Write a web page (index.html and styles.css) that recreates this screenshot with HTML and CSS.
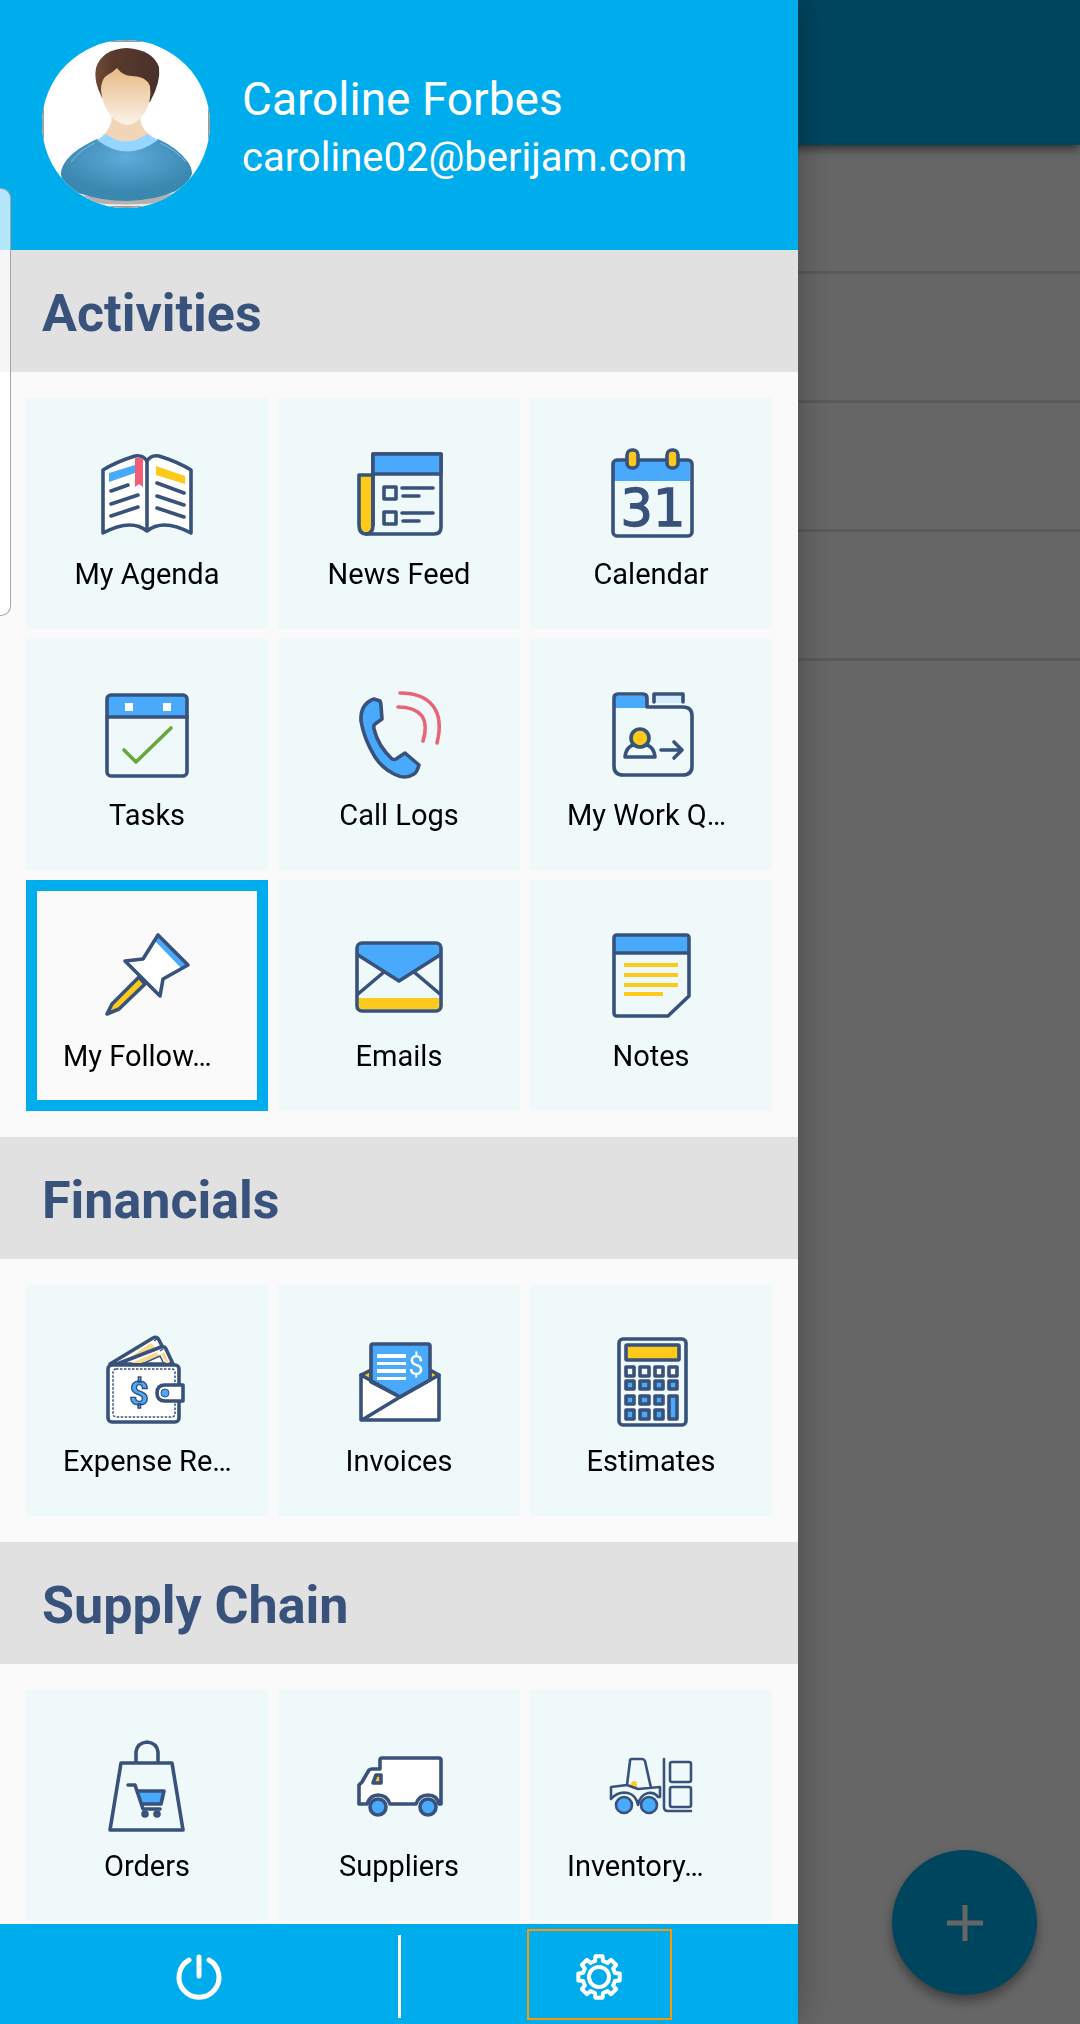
FILE: index.html
```html
<!DOCTYPE html>
<html lang="en">
<head>
    <meta charset="UTF-8">
    <meta name="viewport" content="width=device-width, initial-scale=1.0">
    <title>Menu</title>
    <link rel="stylesheet" href="styles.css">
</head>
<body>

<!-- Page under the drawer -->
<main class="page">
    <header class="app-bar"></header>
    <ul class="list">
        <li></li>
        <li></li>
        <li></li>
        <li></li>
    </ul>
    <button class="fab" aria-label="Add">
        <svg viewBox="0 0 40 40"><path d="M20 2V38M2 20H38"/></svg>
    </button>
</main>
<div class="scrim"></div>

<aside class="drawer">
    <header class="profile">
        <svg class="avatar" viewBox="0 0 168 168">
            <defs>
                <clipPath id="round"><circle cx="84" cy="84" r="84"/></clipPath>
                <linearGradient id="face" x1="0" y1="0" x2="0" y2="1">
                    <stop offset="0" stop-color="#e8b983"/>
                    <stop offset="1" stop-color="#fbf3ea"/>
                </linearGradient>
                <linearGradient id="hair" x1="0" y1="0" x2="1" y2="0">
                    <stop offset="0" stop-color="#6e4a35"/>
                    <stop offset="0.33" stop-color="#55382a"/>
                    <stop offset="0.35" stop-color="#573a2d"/>
                    <stop offset="1" stop-color="#49302a"/>
                </linearGradient>
                <radialGradient id="shirt" cx="0.5" cy="0.3" r="0.55">
                    <stop offset="0" stop-color="#5fabda"/>
                    <stop offset="1" stop-color="#3a87b0"/>
                </radialGradient>
            </defs>
            <g clip-path="url(#round)">
                <rect width="168" height="168" fill="#fff"/>
                <path d="M24 152Q84 166 144 150L140 160Q84 172 30 160Z" fill="#b4b0b0"/>
                <path d="M36 161Q84 168 132 161L126 168H42Z" fill="#eee"/>
                <rect x="1" y="1" width="166" height="166" fill="none" stroke="#9b9b9b" stroke-width="2"/>
                <path d="M70 74Q70 88 60 96L84 108L110 96Q98 90 98 74Z" fill="#f1d5b6"/>
                <path d="M55 99Q26 112 20 128Q18 134 20 139Q26 148 36 153Q60 161 85 161Q114 160 134 151Q146 144 150 134Q150 128 146 122Q136 108 116 99Q86 117 55 99Z" fill="url(#shirt)"/>
                <path d="M29 122Q38 110 53 103M144 122Q134 110 118 103" fill="none" stroke="#7dbbe0" stroke-width="1"/>
                <path d="M64 94Q84 109 105 94L116 100Q85 123 55 100Z" fill="#96d5ff"/>
                <path d="M60 58Q51 40 54 28Q60 9 85 8Q111 10 117 27Q119 42 108 62Z" fill="url(#hair)"/>
                <path d="M75 28Q81 36 90 36Q104 36 108 46Q110 62 102 74Q94 85 85 85Q74 84 66 72Q60 62 59 50Q59 38 67 34Q71 32 75 28Z" fill="url(#face)"/>
            </g>
        </svg>
        <div class="profile-text">
            <div class="name">Caroline Forbes</div>
            <div class="email">caroline02@berijam.com</div>
        </div>
    </header>

    <nav class="menu">
        <h2>Activities</h2>
        <div class="tiles">
            <a class="tile" href="#agenda">
                <svg class="icon" viewBox="0 0 96 96">
                    <path class="white line" d="M48 14C44 8 38 8 33 10Q17 15 4 23V86Q32 71 48 84Q64 71 92 86V23Q79 15 63 10C58 8 52 8 48 14Z"/>
                    <path class="line" d="M48 14V83"/>
                    <path class="blue" d="M10 26L36 18V26L10 35Z"/>
                    <path class="yellow" d="M57 19L86 29V37L57 28Z"/>
                    <path class="red" d="M36 11H44V40L40 37L36 40Z"/>
                    <path class="line" d="M12 44L29 38M12 57L39 48M12 69L39 60M58 36L85 46M58 49L85 58M58 61L85 70"/>
                </svg>
                <span class="label">My Agenda</span>
            </a>
            <a class="tile" href="#news">
                <svg class="icon" viewBox="0 0 96 96">
                    <path class="yellow line" d="M22 28H8V78Q8 87 15 87Q22 87 22 78Z"/>
                    <path class="line" d="M22 78V7H90V80Q90 87 83 87H15"/>
                    <path class="blue line" d="M22 7H90V27H22Z"/>
                    <path class="line" d="M33 40H45V52H33ZM33 65H45V77H33ZM51 41H82M52 49H68M51 66H82M52 74H68"/>
                </svg>
                <span class="label">News Feed</span>
            </a>
            <a class="tile" href="#calendar">
                <svg class="icon" viewBox="0 0 96 96">
                    <path class="blue" d="M11 14H87V34H11Z"/>
                    <rect class="line" x="10" y="13" width="79" height="76" rx="4"/>
                    <rect class="yellow line" x="24" y="3" width="11" height="18" rx="5"/>
                    <rect class="yellow line" x="64" y="3" width="11" height="18" rx="5"/>
                    <text class="day" x="50" y="79">31</text>
                </svg>
                <span class="label">Calendar</span>
            </a>
            <a class="tile" href="#tasks">
                <svg class="icon" viewBox="0 0 96 96">
                    <path class="blue" d="M9 8H88V29H9Z"/>
                    <rect class="line" x="8" y="7" width="80" height="81" rx="4"/>
                    <path class="line" d="M8 29H88"/>
                    <path class="white" d="M26 15H34V23H26ZM64 15H72V23H64Z"/>
                    <path class="line green" d="M25 62L37 74L72 40"/>
                </svg>
                <span class="label">Tasks</span>
            </a>
            <a class="tile" href="#calls">
                <svg class="icon" viewBox="0 0 96 96">
                    <path class="blue line" d="M23 11L29 13Q30 15 30 18L31 31L24 36Q22 38 23 41Q27 58 41 71Q43 72 45 71L54 65L68 77Q66 84 63 86Q54 92 43 86Q31 80 24 69Q13 51 10 33Q9 16 23 11Z"/>
                    <path class="line pink" d="M49 5Q72 5 82 18Q92 31 86 55M47 19Q64 19 71 28Q77 37 72 53"/>
                </svg>
                <span class="label">Call Logs</span>
            </a>
            <a class="tile" href="#queue">
                <svg class="icon" viewBox="0 0 96 96">
                    <path class="blue" d="M12 8H43V20H12Z"/>
                    <path class="pale" d="M52 8H79V15H52Z"/>
                    <path class="line" d="M44 19V10Q44 6 40 6H15Q11 6 11 10V78Q11 87 20 87H80Q89 87 89 78V28Q89 19 80 19ZM51 14V6H80V14"/>
                    <path class="line" d="M22 69Q23 56 37 56Q51 56 52 69Z"/>
                    <circle class="yellow line" cx="37" cy="50" r="9"/>
                    <path class="line" d="M58 62H78M71 54L79 62L71 70"/>
                </svg>
                <span class="label clipped">My Work Q…</span>
            </a>
            <a class="tile selected" href="#following" aria-current="page">
                <svg class="icon" viewBox="0 0 96 96">
                    <path class="yellow line" d="M40 48L13 75L8 85L20 80L46 55Z"/>
                    <path class="white" d="M59 5L90 36L64 50L61 67L26 32L44 30Z"/>
                    <path class="blue" d="M59 6L89 36L83 40L56 12Z"/>
                    <path class="line" d="M59 6L89 36L64 50L61 67L26 32L44 30Z"/>
                </svg>
                <span class="label clipped">My Follow…</span>
            </a>
            <a class="tile" href="#emails">
                <svg class="icon" viewBox="0 0 96 96">
                    <path class="yellow" d="M8 69H88V80H8Z"/>
                    <path class="blue" d="M7 14H89V25L48 52L7 25Z"/>
                    <rect class="line" x="6" y="14" width="84" height="68" rx="5"/>
                    <path class="line" d="M7 26L48 52L89 26M33 43L7 65M63 43L89 65"/>
                </svg>
                <span class="label">Emails</span>
            </a>
            <a class="tile" href="#notes">
                <svg class="icon" viewBox="0 0 96 96">
                    <path class="blue" d="M12 7H86V23H12Z"/>
                    <path class="line" d="M14 6H83Q86 6 86 9V67L65 87H14Q11 87 11 84V9Q11 6 14 6ZM11 24H86"/>
                    <path class="yellow" d="M21 34H75V38H21ZM21 44H75V48H21ZM21 54H75V58H21ZM21 63H60V67H21Z"/>
                </svg>
                <span class="label">Notes</span>
            </a>
        </div>

        <h2>Financials</h2>
        <div class="tiles">
            <a class="tile" href="#expenses">
                <svg class="icon" viewBox="0 0 96 96">
                    <path class="white line" d="M11 30L54 4Q58 2 60 6L72 30Z"/>
                    <path class="cream" d="M27 26L52 9L57 15L36 28Z"/>
                    <path class="white line" d="M18 30L62 13Q66 12 67 15L74 30Z"/>
                    <path class="cream" d="M32 29L58 18L60 22L42 29ZM62 20L65 18L70 29H67Z"/>
                    <path class="thin" d="M43 30L61 22L65 30M55 7L58 5M61 17L64 15"/>
                    <rect class="white line" x="9" y="31" width="71" height="57" rx="4"/>
                    <rect class="dotted" x="14" y="35" width="62" height="48" rx="3"/>
                    <path class="white line" d="M84 51H66Q58 51 58 59Q58 67 66 67H84Z"/>
                    <circle class="blue dot" cx="66" cy="59" r="4"/>
                    <text class="dollar" x="40" y="71">$</text>
                </svg>
                <span class="label clipped">Expense Re…</span>
            </a>
            <a class="tile" href="#invoices">
                <svg class="icon" viewBox="0 0 96 96">
                    <path class="yellow line" d="M20 36L10 41L20 48ZM79 36L88 41L79 48Z"/>
                    <path class="white" d="M10 42L49 63L88 42V86H10Z"/>
                    <path class="blue line" d="M20 48V12Q20 10 22 10H77Q79 10 79 12V46L49 63Z"/>
                    <path class="line" d="M10 41V86H88V41L49 63L10 41M49 63L11 86"/>
                    <path class="white" d="M26 20H55V24H26ZM26 28H55V31H26ZM26 35H55V39H26ZM26 43H55V46H26Z"/>
                    <text class="dollar light" x="65" y="41">$</text>
                </svg>
                <span class="label">Invoices</span>
            </a>
            <a class="tile" href="#estimates">
                <svg class="icon" viewBox="0 0 96 96">
                    <rect class="line" x="16" y="5" width="67" height="86" rx="4"/>
                    <rect class="yellow line" x="23" y="11" width="53" height="15" rx="1"/>
                    <path class="white line" d="M23 33H31V42H23ZM37 33H46V42H37ZM52 33H60V42H52ZM66 33H74V42H66Z"/>
                    <path class="blue line" d="M23 47H31V55H23ZM37 47H46V55H37ZM52 47H60V55H52ZM66 47H74V55H66ZM23 62H31V70H23ZM37 62H46V70H37ZM52 62H60V70H52ZM23 76H31V85H23ZM37 76H46V85H37ZM52 76H60V85H52ZM66 62H74V85H66Z"/>
                </svg>
                <span class="label">Estimates</span>
            </a>
        </div>

        <h2>Supply Chain</h2>
        <div class="tiles">
            <a class="tile" href="#orders">
                <svg class="icon" viewBox="0 0 96 96">
                    <path class="line" d="M22 24H73L84 91H11ZM37 24V13Q38 4 48 3Q58 4 59 13V24"/>
                    <path class="blue" d="M39 52H65L62 65H42Z"/>
                    <path class="line" d="M29 46H36L44 70H61M39 52H65L62 65H43"/>
                    <circle class="line" cx="46" cy="75" r="2"/>
                    <circle class="line" cx="58" cy="75" r="2"/>
                </svg>
                <span class="label">Orders</span>
            </a>
            <a class="tile" href="#suppliers">
                <svg class="icon" viewBox="0 0 96 96">
                    <path class="white line" d="M8 65V46L11 43L18 31Q19 30 21 30H29V21Q29 19 31 19H88Q90 19 90 21V65H88Q86 56 77 56Q68 56 65 65H39Q36 56 27 56Q19 56 16 65Z"/>
                    <path class="yellow line" d="M25 36H30V44H22Z"/>
                    <circle class="blue line" cx="27" cy="68" r="8"/>
                    <circle class="blue line" cx="77" cy="68" r="8"/>
                </svg>
                <span class="label">Suppliers</span>
            </a>
            <a class="tile" href="#inventory">
                <svg class="icon thin-icon" viewBox="0 0 96 96">
                    <ellipse class="yellow" cx="31" cy="46" rx="3" ry="4"/>
                    <path class="line" d="M24 46L27 22Q27 20 29 20H39Q41 20 42 22L48 49M8 60V48L24 46L35 50L57 48V58H55Q52 53 45 54Q37 56 35 66Q33 56 25 54Q15 52 8 60"/>
                    <circle class="blue line" cx="21" cy="66" r="8"/>
                    <circle class="blue line" cx="46" cy="66" r="8"/>
                    <path class="line" d="M61 20V68Q61 72 65 72H88"/>
                    <rect class="line" x="67" y="23" width="21" height="20" rx="2"/>
                    <rect class="line" x="67" y="48" width="21" height="20" rx="2"/>
                </svg>
                <span class="label clipped">Inventory…</span>
            </a>
        </div>
    </nav>

    <footer class="bottom-bar">
        <button aria-label="Log out">
            <svg viewBox="0 0 48 48"><path class="power" d="M14 7A20 20 0 1 0 34 7M24 4V23"/></svg>
        </button>
        <span class="separator"></span>
        <button aria-label="Settings">
            <span class="focus-box">
                <svg viewBox="0 0 48 48">
                    <path class="gear" d="M20 8L20.4 3.3H27.6L28 8L32.5 9.9L36.1 6.8L41.2 11.9L38.1 15.5L40 20L44.7 20.4V27.6L40 28L38.1 32.5L41.2 36.1L36.1 41.2L32.5 38.1L28 40L27.6 44.7H20.4L20 40L15.5 38.1L11.9 41.2L6.8 36.1L9.9 32.5L8 28L3.3 27.6V20.4L8 20L9.9 15.5L6.8 11.9L11.9 6.8L15.5 9.9Z"/>
                    <circle class="gear" cx="24" cy="24" r="10"/>
                </svg>
            </span>
        </button>
    </footer>
</aside>

<!-- Edge panel handle -->
<div class="edge-panel"></div>

</body>
</html>
```
FILE: styles.css
```css
* {
    box-sizing: border-box;
}

body {
    margin: 0;
    height: 100vh;
    overflow: hidden;
    background-color: #fff;
    font-family: Roboto, sans-serif;
}

/* page under the drawer */
.app-bar {
    position: relative;
    height: 145px;
    background-color: #00adec;
    box-shadow: 0 3px 10px rgba(0, 0, 0, 0.6);
}

.list {
    list-style: none;
    margin: 0;
    padding: 0;
}

.list li {
    height: 129px;
    border-bottom: 3px solid #e0e0e0;
}

.fab {
    position: fixed;
    right: 43px;
    bottom: 29px;
    width: 145px;
    height: 145px;
    padding: 0;
    border: none;
    border-radius: 50%;
    background-color: #00adec;
    box-shadow: 0 6px 12px rgba(0, 0, 0, 0.4);
}

.fab svg {
    display: block;
    width: 40px;
    height: 40px;
    margin: auto;
    stroke: #fff;
    stroke-width: 5;
}

.scrim {
    position: fixed;
    inset: 0;
    background-color: rgba(0, 0, 0, 0.6);
}

/* drawer */
.drawer {
    position: fixed;
    top: 0;
    bottom: 0;
    left: 0;
    width: 100%;
    max-width: 798px;
    display: flex;
    flex-direction: column;
    background-color: #fafafa;
    box-shadow: 0 0 36px rgba(0, 0, 0, 0.3);
}

.profile {
    display: flex;
    align-items: flex-start;
    gap: 32px;
    height: 250px;
    flex: none;
    padding: 40px 42px;
    background-color: #00adec;
    color: #fff;
}

.avatar {
    width: 168px;
    height: 168px;
    flex: none;
}

.profile-text {
    padding-top: 30px;
}

.name {
    font-size: 46px;
    line-height: 58px;
}

.email {
    font-size: 40px;
    line-height: 60px;
}

.menu {
    flex: 1;
    overflow-y: auto;
    scrollbar-width: none;
}

.menu h2 {
    margin: 0;
    padding: 33px 42px 27px;
    background-color: #e1e1e1;
    color: #38527c;
    font-size: 52px;
    line-height: 62px;
}

.tiles {
    display: grid;
    grid-template-columns: repeat(3, 1fr);
    gap: 10px;
    padding: 26px;
}

.tile {
    display: flex;
    flex-direction: column;
    align-items: center;
    gap: 14px;
    height: 231px;
    padding-top: 38px;
    border: 11px solid #f0f9fa;
    background-color: #f0f9fa;
    color: #000;
    text-decoration: none;
}

.tile.selected {
    border-color: #00adec;
    background-color: #fafafa;
}

.label {
    font-size: 29px;
    line-height: 34px;
    white-space: nowrap;
}

.label.clipped {
    width: 168px;
}

/* tile icons */
.icon {
    width: 96px;
    height: 96px;
    flex: none;
    fill: none;
}

.line {
    stroke: #38527c;
    stroke-width: 3.6;
    stroke-linecap: round;
    stroke-linejoin: round;
}

.thin-icon .line {
    stroke-width: 2.6;
}

.thin {
    stroke: #38527c;
    stroke-width: 1.5;
}

.dotted {
    stroke: #38527c;
    stroke-width: 1.5;
    stroke-dasharray: 2.5 1.5;
}

.dot {
    stroke: #38527c;
    stroke-width: 1;
}

.green {
    stroke: #69a63e;
}

.pink {
    stroke: #e8647a;
}

.blue {
    fill: #49a9fb;
}

.pale {
    fill: #d6ebfc;
}

.yellow {
    fill: #fdc91a;
}

.cream {
    fill: #fbd98a;
}

.red {
    fill: #f15e78;
}

.white {
    fill: #fff;
}

.day {
    fill: #38527c;
    stroke: #38527c;
    stroke-width: 1.4;
    font-family: "DejaVu Sans", sans-serif;
    font-size: 51px;
    text-anchor: middle;
}

.dollar {
    fill: #49a9fb;
    stroke: #38527c;
    stroke-width: 1.4;
    font-size: 34px;
    font-weight: bold;
    text-anchor: middle;
}

.dollar.light {
    fill: #fff;
    stroke: none;
    font-size: 27px;
    font-weight: normal;
}

/* bottom bar */
.bottom-bar {
    display: flex;
    align-items: center;
    flex: none;
    height: 100px;
    background-color: #00adec;
}

.bottom-bar button {
    flex: 1;
    display: flex;
    justify-content: center;
    align-items: center;
    padding: 0;
    border: none;
    background: none;
}

.bottom-bar svg {
    width: 48px;
    height: 48px;
    margin-top: 5px;
    fill: none;
    stroke: #fff;
    stroke-linecap: round;
    stroke-linejoin: round;
}

.power {
    stroke-width: 5;
}

.gear {
    stroke-width: 4;
}

.separator {
    width: 3px;
    height: 83px;
    margin-top: 5px;
    background-color: #fff;
}

.focus-box {
    display: flex;
    justify-content: center;
    align-items: center;
    width: 145px;
    height: 91px;
    border: 2px solid #ff9800;
}

.edge-panel {
    position: fixed;
    top: 188px;
    left: 0;
    width: 11px;
    height: 428px;
    border: 1px solid #a5a5a5;
    border-left: none;
    border-radius: 0 10px 10px 0;
    background-color: rgba(255, 255, 255, 0.7);
}
```
